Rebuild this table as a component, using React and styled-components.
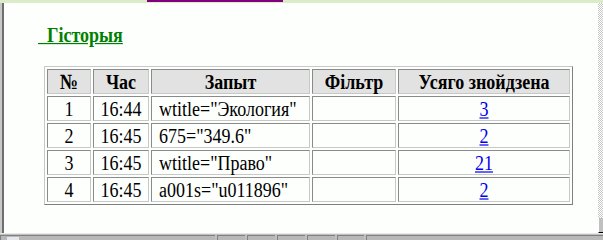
import React from "react";
import styled, { createGlobalStyle } from "styled-components";

const GlobalStyle = createGlobalStyle`
  html, body { margin: 0; padding: 0; background: #fdfffd; }
  body { font-family: "Liberation Serif", "Times New Roman", serif; }
`;

const rows = [
  { n: 1, time: "16:44", query: 'wtitle="Экология"', filter: "", total: "3" },
  { n: 2, time: "16:45", query: '675="349.6"', filter: "", total: "2" },
  { n: 3, time: "16:45", query: 'wtitle="Право"', filter: "", total: "21" },
  { n: 4, time: "16:45", query: 'a001s="u011896"', filter: "", total: "2" },
];

const App = () => {
  return (
    <Frame>
      <GlobalStyle />
      <TopStrip>
        <TopMark />
      </TopStrip>
      <Middle>
        <LeftEdge />
        <Content>
          <Title>{"\u00a0\u00a0"}Гісторыя</Title>
          <HistoryTable>
            <colgroup>
              <col style={{ width: 44 }} />
              <col style={{ width: 56 }} />
              <col style={{ width: 159 }} />
              <col style={{ width: 84 }} />
              <col style={{ width: 172 }} />
            </colgroup>
            <thead>
              <tr>
                <Th><Tall>№</Tall></Th>
                <Th><Tall>Час</Tall></Th>
                <Th><Tall>Запыт</Tall></Th>
                <Th><Tall>Фільтр</Tall></Th>
                <Th><Tall>Усяго знойдзена</Tall></Th>
              </tr>
            </thead>
            <tbody>
              {rows.map((r) => (
                <tr key={r.n}>
                  <Td $align="center"><Tall>{r.n}</Tall></Td>
                  <Td $align="center"><Tall>{r.time}</Tall></Td>
                  <Td><Tall>{r.query}</Tall></Td>
                  <Td>{r.filter}</Td>
                  <Td $align="center">
                    <Tall>
                      <CountLink href="#">{r.total}</CountLink>
                    </Tall>
                  </Td>
                </tr>
              ))}
            </tbody>
          </HistoryTable>
        </Content>
        <Checker>
          <ScrollThumb />
        </Checker>
      </Middle>
      <StatusBar>
        <StatusCell $w={214}>
          <StatusIcon />
        </StatusCell>
        <StatusCell $w={27} />
        <StatusCell $w={27} />
        <StatusCell $w={27} />
        <StatusCell $w={27} />
        <StatusCell $w={26} />
        <StatusCell $grow />
      </StatusBar>
    </Frame>
  );
};

export default App;

const Frame = styled.div`
  width: 603px;
  height: 240px;
  display: flex;
  flex-direction: column;
  overflow: hidden;
  background: #fdfffd;
`;

const TopStrip = styled.div`
  height: 3px;
  background: #dcecc9;
  position: relative;
  flex: none;
`;

const TopMark = styled.div`
  position: absolute;
  left: 147px;
  top: 0;
  width: 136px;
  height: 2px;
  background: #800080;
`;

const Middle = styled.div`
  flex: 1;
  display: flex;
  min-height: 0;
`;

const LeftEdge = styled.div`
  width: 4px;
  flex: none;
  border-left: 2px solid #c8c8c8;
  background: #6e6e6e;
  box-sizing: border-box;
`;

const Content = styled.div`
  flex: 1;
  padding: 21px 0 0 34px;
  box-sizing: border-box;
`;

/* the source screenshot is stretched vertically, so text is a bit taller than wide */
const Tall = styled.span`
  display: inline-block;
  transform: scaleY(1.2);
`;

const Title = styled.div`
  font-family: "Liberation Serif", "Times New Roman", serif;
  font-weight: bold;
  font-size: 18px;
  line-height: 22px;
  color: #008000;
  text-decoration: underline;
  display: inline-block;
  transform: scaleY(1.2);
  transform-origin: 0 60%;
  margin-bottom: 20px;
`;

const HistoryTable = styled.table`
  margin-left: 6px;
  border-collapse: separate;
  border-spacing: 2px;
  border: 1px solid;
  border-color: #c8c8c8 #7f7f7f #7f7f7f #c8c8c8;
  table-layout: fixed;
  font-family: "Liberation Serif", "Times New Roman", serif;
  font-size: 18px;
  color: #000;
`;

const Th = styled.th`
  height: 23px;
  padding: 0 2px;
  background: #e2e2e2;
  border: 1px solid;
  border-color: #8a8a8a #c8c8c8 #c8c8c8 #8a8a8a;
  font-weight: bold;
  text-align: center;
  white-space: nowrap;
  line-height: 20px;
`;

const Td = styled.td`
  height: 23px;
  padding: 0 4px 0 7px;
  background: #fdfffd;
  border: 1px solid;
  border-color: #8a8a8a #c8c8c8 #c8c8c8 #8a8a8a;
  text-align: ${(p) => p.$align || "left"};
  white-space: nowrap;
  line-height: 20px;
  ${(p) => p.$align === "center" && "padding: 0 2px;"}
`;

const CountLink = styled.a`
  color: #0000ee;
  text-decoration: underline;
`;

const Checker = styled.div`
  width: 5px;
  flex: none;
  position: relative;
  background: repeating-conic-gradient(#c8c8c8 0% 25%, #ffffff 0% 50%) 0 0 / 2px 2px;
`;

const ScrollThumb = styled.div`
  position: absolute;
  left: 0;
  bottom: 0;
  width: 5px;
  height: 15px;
  background: #c0c0c0;
  border-left: 1px solid #ffffff;
  border-bottom: 1px solid #000;
  box-sizing: border-box;
`;

const StatusBar = styled.div`
  height: 7px;
  flex: none;
  display: flex;
  gap: 2px;
  background: #c0c0c0;
  border-top: 1px solid #e8e8e8;
  padding-top: 1px;
  box-sizing: border-box;
`;

const StatusCell = styled.div`
  width: ${(p) => (p.$grow ? "auto" : `${p.$w}px`)};
  flex: ${(p) => (p.$grow ? 1 : "none")};
  border-top: 1px solid #808080;
  border-left: 1px solid #808080;
  background: #b8b8b8;
  position: relative;
`;

const StatusIcon = styled.div`
  position: absolute;
  left: 6px;
  top: 1px;
  width: 12px;
  height: 5px;
  background: #e6e6ee;
`;
